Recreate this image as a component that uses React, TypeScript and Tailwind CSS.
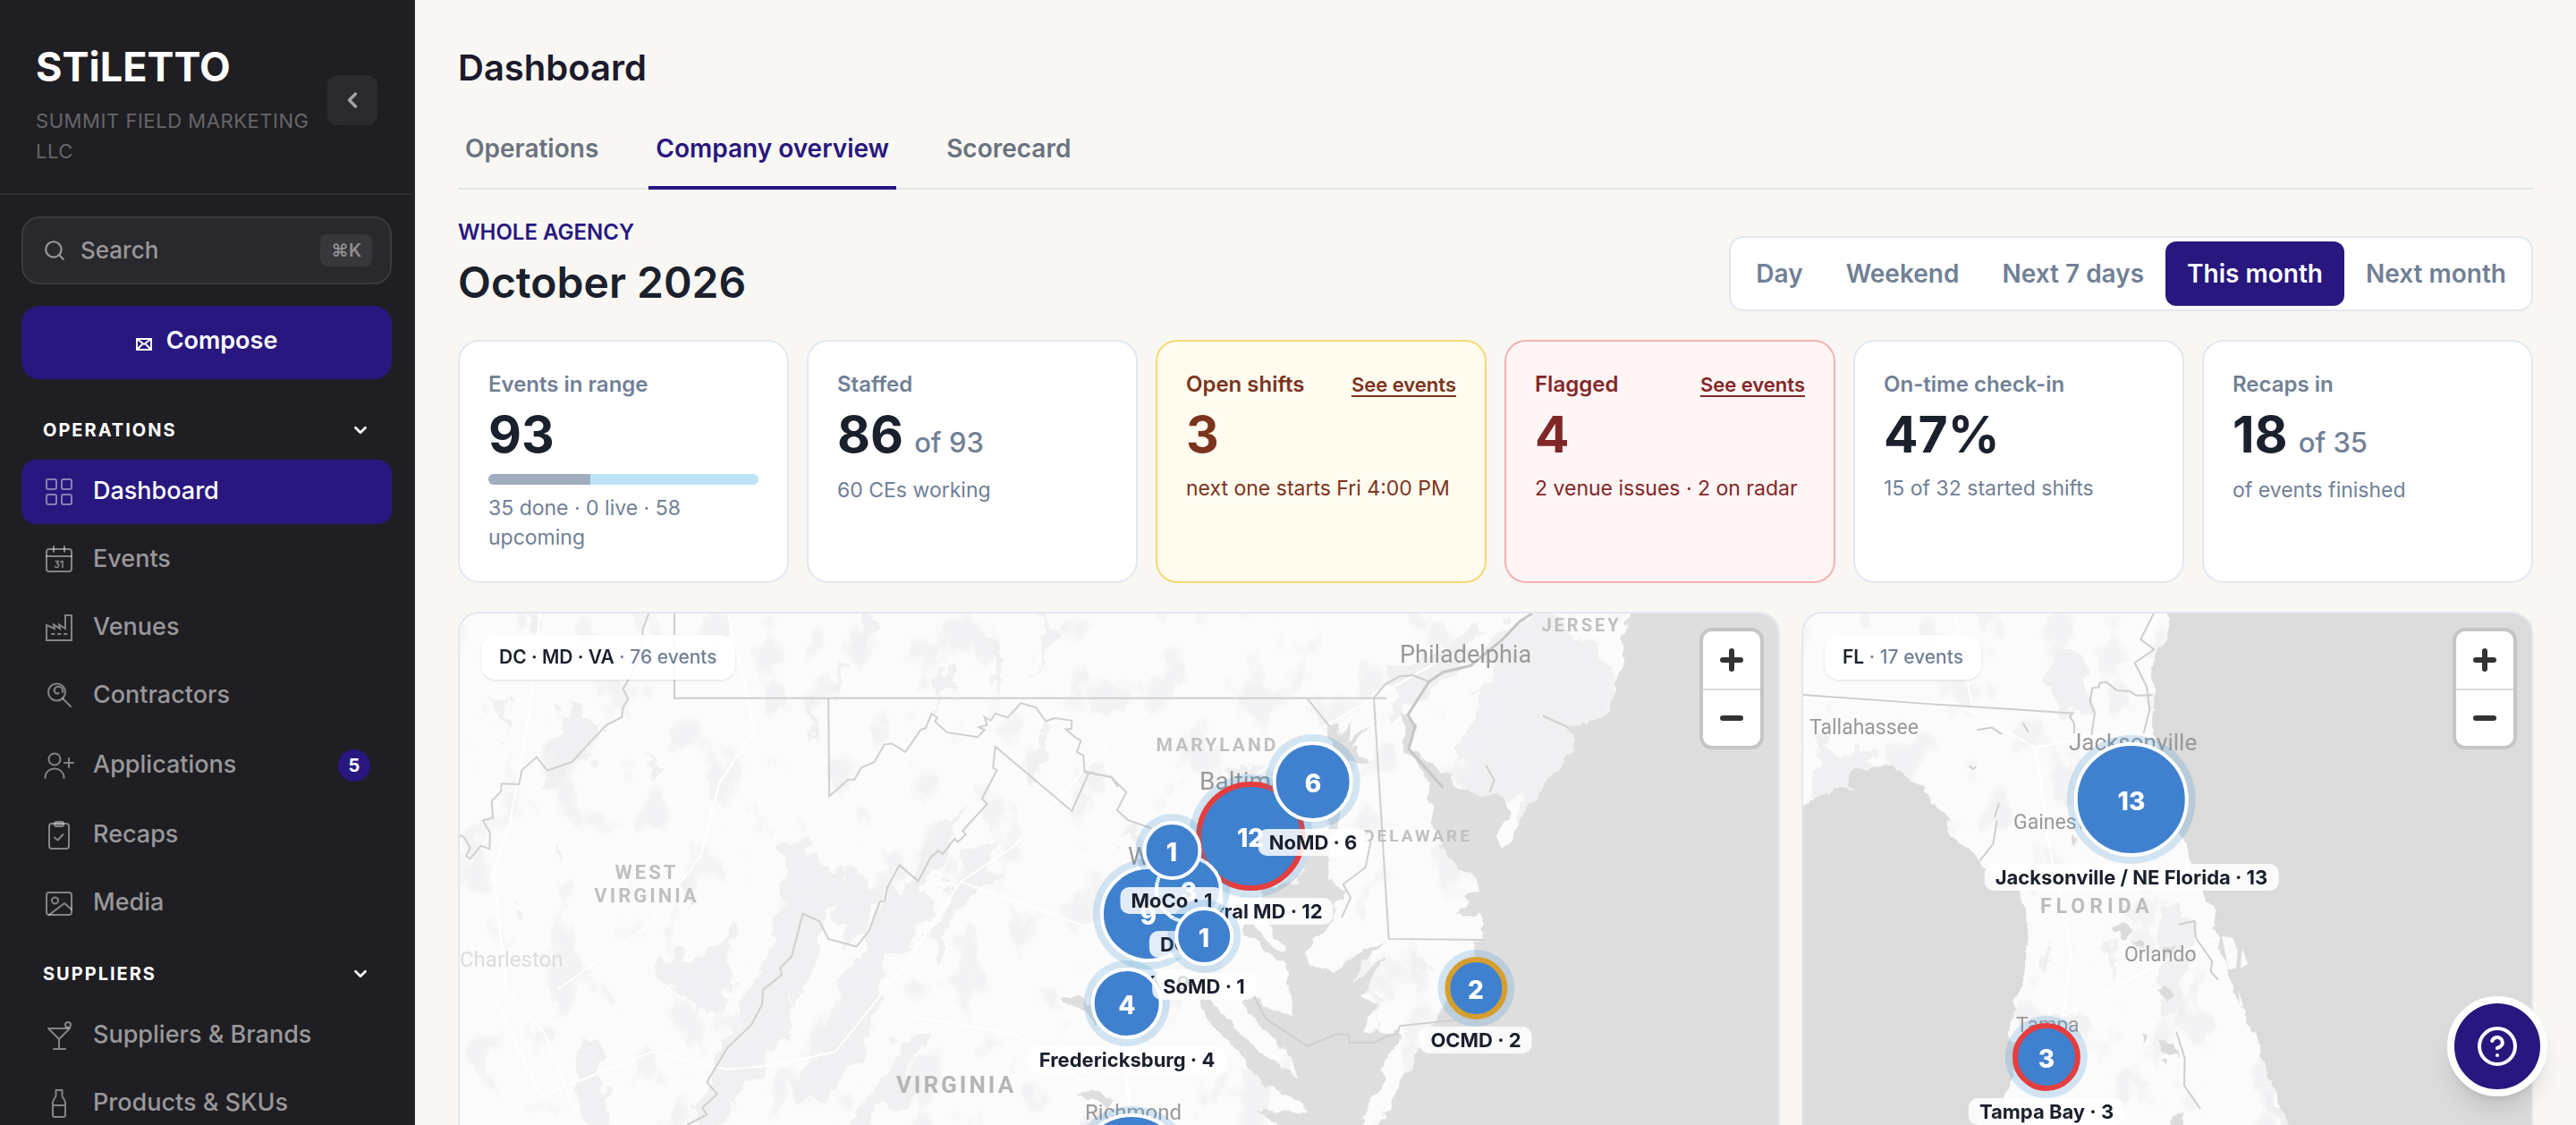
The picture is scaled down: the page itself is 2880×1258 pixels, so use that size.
import { ReactNode, useState } from "react";
import { ChevronDown, ChevronLeft, CircleQuestionMark, Search } from "lucide-react";
import clsx from "clsx";

interface NavItem {
  label: string;
  icon: ReactNode;
  badge?: number;
}

interface Marker {
  name: string;
  count: number;
  x: number;
  y: number;
  size: number;
  ring?: "red" | "amber";
}

interface Stat {
  label: string;
  value: string;
  suffix?: string;
  note: string;
  tone?: "amber" | "red";
  progress?: number;
}

const operations: NavItem[] = [
  {
    label: "Dashboard",
    icon: (
      <>
        <rect x="4" y="4" width="11" height="11" rx="2" />
        <rect x="21" y="4" width="11" height="11" rx="2" />
        <rect x="4" y="21" width="11" height="11" rx="2" />
        <rect x="21" y="21" width="11" height="11" rx="2" />
      </>
    ),
  },
  {
    label: "Events",
    icon: (
      <>
        <rect x="4" y="6" width="28" height="25" rx="3" />
        <path d="M4 14h28M12 3v6M24 3v6" />
        <path strokeWidth="1.6" d="M14 19.5h3.6l-2 2.6c3 0 2.600 4.400-.2 4.400-1 0-1.700-.5-2-1.200M20 20.500l2-1.200v7.300" />
      </>
    ),
  },
  {
    label: "Venues",
    icon: (
      <>
        <path d="M4 15v17h28V4h-7v15l-7-4.500 1 4.500-7-4.500 1 4.500z" strokeLinejoin="miter" />
        <path d="M10 25h2.500M17 25h2.500M24 25h2.500" />
      </>
    ),
  },
  {
    label: "Contractors",
    icon: (
      <>
        <circle cx="15.500" cy="14" r="9.500" />
        <path d="M22 21l9 9" />
        <path d="M17.500 15c-4 2-6.500-3-3.500-6 4-3 9 0 8 5" />
      </>
    ),
  },
  {
    label: "Applications",
    badge: 5,
    icon: (
      <>
        <circle cx="13" cy="11" r="6.500" />
        <path d="M2.500 32c0-14 21-14 21 0M29 10v10M24 15h10" />
      </>
    ),
  },
  {
    label: "Recaps",
    icon: (
      <>
        <rect x="7" y="5" width="22" height="28" rx="3" />
        <rect x="13" y="3" width="10" height="5" rx="2" />
        <path d="M15 5.500h6M13 20.500l3.500 3 6-6.500" />
      </>
    ),
  },
  {
    label: "Media",
    icon: (
      <>
        <rect x="4" y="6" width="28" height="25" rx="3" />
        <circle cx="13.500" cy="15" r="3.500" />
        <path d="M7 31l17-13 8 7" />
      </>
    ),
  },
];

const suppliers: NavItem[] = [
  {
    label: "Suppliers & Brands",
    icon: (
      <>
        <path d="M6 10h24L18 22zM18 22v11M12 33h13" />
        <circle cx="28" cy="6" r="3" />
      </>
    ),
  },
  {
    label: "Products & SKUs",
    icon: <path d="M14.500 3h7v6c0 3 3.500 4 3.500 8v14c0 1.500-.5 2-2 2H13c-1.500 0-2-.5-2-2V17c0-4 3.500-5 3.500-8zM11 20h14" />,
  },
];

const tabs = ["Operations", "Company overview", "Scorecard"];
const ranges = ["Day", "Weekend", "Next 7 days", "This month", "Next month"];

const stats: Stat[] = [
  { label: "Events in range", value: "93", note: "35 done · 0 live · 58 upcoming", progress: 35 / 93 },
  { label: "Staffed", value: "86", suffix: "of 93", note: "60 CEs working" },
  { label: "Open shifts", value: "3", note: "next one starts Fri 4:00 PM", tone: "amber" },
  { label: "Flagged", value: "4", note: "2 venue issues · 2 on radar", tone: "red" },
  { label: "On-time check-in", value: "47%", note: "15 of 32 started shifts" },
  { label: "Recaps in", value: "18", suffix: "of 35", note: "of events finished" },
];

// biggest first, so the small markets stay on top
const midAtlantic: Marker[] = [
  { name: "Richmond", count: 14, x: 751, y: 621, size: 124 },
  { name: "Central MD", count: 12, x: 884, y: 249, size: 122, ring: "red" },
  { name: "NoVA", count: 9, x: 770, y: 336, size: 108 },
  { name: "NoMD", count: 6, x: 954, y: 188, size: 90 },
  { name: "Fredericksburg", count: 4, x: 746, y: 436, size: 80 },
  { name: "DC", count: 3, x: 815, y: 309, size: 76 },
  { name: "OCMD", count: 2, x: 1136, y: 419, size: 70, ring: "amber" },
  { name: "MoCo", count: 1, x: 796, y: 265, size: 66 },
  { name: "SoMD", count: 1, x: 832, y: 361, size: 66 },
];

const florida: Marker[] = [
  { name: "Jacksonville / NE Florida", count: 13, x: 367, y: 208, size: 128 },
  { name: "Tampa Bay", count: 3, x: 272, y: 496, size: 76, ring: "red" },
];

function NavSection({ title, items, active }: { title: string; items: NavItem[]; active?: string }) {
  return (
    <section>
      <button className="flex h-[66px] w-full items-center justify-between pr-6 pl-6 text-[20px] font-bold tracking-widest text-white uppercase">
        {title}
        <ChevronDown size={22} strokeWidth={3} />
      </button>
      <ul className="flex flex-col gap-1">
        {items.map(item => (
          <li key={item.label}>
            <a
              href="#"
              className={clsx(
                "flex items-center gap-5 rounded-2xl pr-6 pl-6 text-[27px] font-medium",
                item.badge ? "h-[76px]" : "h-[72px]",
                item.label === active ? "bg-[#28177f] text-white" : "text-[#99989b]"
              )}
            >
              <svg
                viewBox="0 0 36 36"
                className="size-9 shrink-0 fill-none stroke-white/45 stroke-2"
                strokeLinecap="round"
                strokeLinejoin="round"
                aria-hidden="true"
              >
                {item.icon}
              </svg>
              <span className="grow pb-0.5">{item.label}</span>
              {item.badge ? (
                <span className="flex size-9 items-center justify-center rounded-full bg-[#28177f] text-[20px] font-bold text-white">
                  {item.badge}
                </span>
              ) : null}
            </a>
          </li>
        ))}
      </ul>
    </section>
  );
}

function Sidebar() {
  return (
    <aside className="flex w-[464px] shrink-0 flex-col overflow-hidden border-r-2 border-[#29282d] bg-[#1f1e23]">
      <header className="flex items-start justify-between border-b-2 border-[#2d2c31] pt-12 pr-10 pb-[30px] pl-10">
        <div>
          <div className="text-[45px] leading-[54px] font-bold text-white">STiLETTO</div>
          <div className="mt-4 w-[320px] text-[22px] leading-[34px] tracking-wide text-[#67666a] uppercase">
            Summit Field Marketing LLC
          </div>
        </div>
        <button
          aria-label="Collapse sidebar"
          className="mt-9 flex size-14 shrink-0 items-center justify-center rounded-xl bg-[#2b2a2f] text-[#a3a2a5]"
        >
          <ChevronLeft size={28} strokeWidth={3} />
        </button>
      </header>
      <div className="px-6 pt-6">
        <label className="flex h-[76px] items-center rounded-[20px] border-2 border-[#3b3a3f] bg-[#29282d] pr-5 pl-[22px]">
          <Search size={26} strokeWidth={2} className="shrink-0 text-[#99989b]" />
          <input
            type="text"
            aria-label="Search"
            placeholder="Search"
            className="min-w-0 grow bg-transparent pb-0.5 pl-4 text-[26px] font-medium text-white outline-none placeholder:text-[#99989b]"
          />
          <kbd className="flex h-9 items-center rounded-lg bg-[#38373c] px-3 font-[Inter,sans-serif] text-[20px] font-semibold text-[#8f8e92]">
            ⌘K
          </kbd>
        </label>
        <button className="mt-6 flex h-[82px] w-full items-center justify-center gap-4 rounded-[20px] bg-[#28177f] pb-1 text-[27px] font-semibold text-white">
          <svg viewBox="0 0 18 14" className="mt-2 h-3.5 w-[18px] fill-none stroke-white stroke-2" aria-hidden="true">
            <path d="M1 1h16v12H1zM1 1l8 6 8-6M1 13l6-6M17 13l-6-6" />
          </svg>
          Compose
        </button>
      </div>
      <nav className="flex flex-col gap-2.5 px-6 pt-6">
        <NavSection title="Operations" items={operations} active="Dashboard" />
        <NavSection title="Suppliers" items={suppliers} />
      </nav>
    </aside>
  );
}

function StatCard({ stat }: { stat: Stat }) {
  const { label, value, suffix, note, tone, progress } = stat;
  return (
    <article
      className={clsx(
        "rounded-3xl border-2 px-8 pt-7 pb-8",
        !tone && "border-[#e2e8f0] bg-white text-[#718096]",
        tone === "amber" && "border-[#f6d873] bg-[#fffbef] text-[#7b341e]",
        tone === "red" && "border-[#f5b0b5] bg-[#fff5f5] text-[#822727]"
      )}
    >
      <div className="flex items-center justify-between leading-10">
        <h3 className="text-[24px] font-semibold">{label}</h3>
        {tone ? (
          <a href="#" className="text-[22px] font-semibold underline decoration-2 underline-offset-4">
            See events
          </a>
        ) : null}
      </div>
      <p className={clsx("text-[57px] leading-[72px] font-bold", !tone && "text-[#1a202c]")}>
        {value}
        {suffix ? <span className="ml-3 text-[31px] leading-none font-medium text-[#718096]">{suffix}</span> : null}
      </p>
      {progress ? (
        <div className="mt-2 h-3 overflow-hidden rounded-full bg-[#bee3f8]">
          <div className="h-full bg-[#a0aec0]" style={{ width: `${progress * 100}%` }} />
        </div>
      ) : null}
      <p className={clsx("text-[23px] leading-[33px]", progress || suffix ? "mt-2.5" : "mt-2")}>{note}</p>
    </article>
  );
}

function MapMarker({ marker }: { marker: Marker }) {
  const { name, count, x, y, size, ring } = marker;
  return (
    <button
      aria-label={`${name}, ${count} events`}
      className="absolute flex flex-col items-center gap-2"
      style={{ left: x, top: y - size / 2, transform: "translateX(-50%)" }}
    >
      <span
        className={clsx(
          "flex items-center justify-center rounded-full bg-[#4081cf] pt-1 text-[28px] font-extrabold text-white shadow-[0_0_0_8px_rgba(49,140,206,0.2)]",
          !ring && "border-4 border-white",
          ring === "red" && "border-[6px] border-[#e53e3e]",
          ring === "amber" && "border-[6px] border-[#d69e2e]"
        )}
        style={{ width: size, height: size }}
      >
        {count}
      </span>
      <span className="rounded-[10px] bg-white/85 px-3 text-[22px] leading-[30px] font-bold whitespace-nowrap text-[#1a202c]">
        {name} · {count}
      </span>
    </button>
  );
}

function MapPanel({ region, events, markers, children }: { region: string; events: number; markers: Marker[]; children: ReactNode }) {
  return (
    <section className="relative h-[720px] overflow-hidden rounded-3xl border-2 border-[#e2e8f0] bg-[#fbfbfb] font-[Inter,sans-serif]">
      {children}
      {markers.map(marker => (
        <MapMarker key={marker.name} marker={marker} />
      ))}
      <div className="absolute top-6 left-6 rounded-2xl bg-white/90 px-5 text-[21px] leading-[50px] font-medium text-[#718096] shadow-sm">
        <strong className="font-semibold text-[#1a202c]">{region}</strong> · {events} events
      </div>
      <div className="absolute top-4 right-4 flex w-[72px] flex-col overflow-hidden rounded-[14px] border-4 border-[#c5c5c5] bg-white">
        <button aria-label="Zoom in" className="flex h-[66px] items-center justify-center border-b-2 border-[#d9d9d9]">
          <svg viewBox="0 0 26 26" className="size-[26px] stroke-[#333] stroke-6" strokeLinecap="round">
            <path d="M3 13h20M13 3v20" />
          </svg>
        </button>
        <button aria-label="Zoom out" className="flex h-[62px] items-center justify-center">
          <svg viewBox="0 0 26 26" className="size-[26px] stroke-[#333] stroke-6" strokeLinecap="round">
            <path d="M3 13h20" />
          </svg>
        </button>
      </div>
    </section>
  );
}

function MidAtlanticMap() {
  return (
    <svg viewBox="0 0 1474 716" preserveAspectRatio="xMinYMin slice" className="absolute inset-0 size-full" aria-hidden="true">
      <defs>
        <filter id="coast" x="0" y="0" width="1" height="1">
          <feTurbulence type="fractalNoise" baseFrequency="0.06" numOctaves="3" seed="4" />
          <feDisplacementMap in="SourceGraphic" scale="14" xChannelSelector="R" yChannelSelector="G" />
        </filter>
        <filter id="forest" x="0" y="0" width="1" height="1">
          <feTurbulence type="fractalNoise" baseFrequency="0.035" numOctaves="4" seed="9" />
          <feDisplacementMap in="SourceGraphic" scale="44" xChannelSelector="R" yChannelSelector="G" />
        </filter>
        {/* scattered small patches of ground cover */}
        <filter id="ground" x="0" y="0" width="1" height="1" colorInterpolationFilters="sRGB">
          <feTurbulence type="fractalNoise" baseFrequency="0.022 0.016" numOctaves="4" seed="21" />
          <feColorMatrix values="0 0 0 0 0.953  0 0 0 0 0.953  0 0 0 0 0.96  9 0 0 0 -5.2" />
        </filter>
      </defs>

      <rect width="1474" height="716" filter="url(#ground)" />

      {/* parks and forest */}
      <g filter="url(#forest)" fill="#f0f0f2">
        <path d="M360 265l30-20 10 30 45 15 18 25-8 50-25 10-10-40-20 45-25 30-8 70-20 10-10 35-25 5 10-50-5-50 30-50 12-55z" />
        <path d="M540 235l25-20-20 60-40 60-20-10z" />
        <path d="M480 300l35 10 5 30-50 70-10 60-40 60-40 30-5-40 30-50 25-60 30-50z" />
        <path d="M570 270l30-15-5 30-40 60-20 40-10-20 20-50z" />
        <path d="M225 385l60-10 15-30 10 40-10 45-35 15-45-40z" />
        <path d="M500 470l20-5-20 80-70 60-40 40-20 60h-120l40-40 50-30 90-60z" />
        <path d="M330 450l20 10-20 50-50 70-20-10 20-60z" />
        <path d="M140 460l15 30 10 50-10 60-20-60-5-40z" />
        <path d="M120 100l35 30-20 45-40 20z" />
        <path d="M30 100l30-5-15 40zM75 0l15 0-5 25zM210 160l20 15-15 15zM420 50l20 5-20 30zM440 0l30 0-20 40zM250 300l15 15-15 20z" />
        <path d="M105 250l10 20-8 10zM70 320l8 12-8 8zM390 90l10 60-15-30zM600 20l12 30-10 50zM640 140l15-20-5 70-15 10z" />
        <path d="M540 60l10 10-30 50zM655 0l15 20-30 50z" />
        <path d="M1170 0l60 5 60 60-5 60-60 20-30 60-50 20-30-70z" />
        <path d="M1040 70l50-30 60-30-40 60-70 45z" />
        <path d="M1185 180l40-50 30 30-70 70z" />
        <path d="M740 240l25 10 20 25-25 20zM850 180l40-10 20 15-40 30z" />
        <path d="M1055 380l30 10-10 25zM1015 425l20 10-10 30zM700 560l40 20-10 20-40-20z" />
      </g>

      {/* highways */}
      <g fill="none" stroke="#fff" strokeWidth="2">
        <path d="M90 0L75 130 55 240 38 290 52 420 95 470 130 560M300 0L330 130 290 190 270 270 210 350 110 420M40 430L90 540 215 490 300 510 350 505 420 490" />
        <path d="M740 130L620 260 560 300 500 390 420 490M560 300L700 350 770 330 850 210 960 130 1100 50M770 330L740 450 750 570M500 450L620 470 750 560" />
      </g>

      {/* ocean, bays and rivers */}
      <g filter="url(#coast)" fill="#dedede">
        <path
          transform="translate(986 -16) scale(.3333 .375)"
          d="M990 0L940 110L945 190L910 290L895 340L830 372L760 385L790 420L760 470L700 530L640 600L600 660L560 725L525 742L522 715L545 660L570 640L545 590L490 575L440 580L385 550L330 510L280 480L232 440L250 380L225 345L205 345L218 390L213 450L255 485L288 530L296 600L302 660L340 720L348 760L400 815L455 832L462 870L410 878L435 900L380 940L472 940L475 1018L442 1018L450 1060L440 1150L325 1215L315 1262L290 1280L250 1370L190 1450L130 1568L60 1700L30 1950H1600V0Z"
        />
        <path
          transform="translate(666 94) scale(.3571 .3333)"
          d="M860 100L890 90L885 125L935 80L905 150L990 90L930 160L985 220L900 210L925 300L880 430L860 480L868 540L850 610L905 640L880 690L860 760L780 850L800 900L880 915L920 880L965 855L1040 820L980 870L945 925L930 960L1030 870L985 960L960 1000L1000 1030L960 1120L1060 1130L1078 1105L1062 1180L1020 1240L1035 1290L985 1345L960 1450L930 1700H750L700 1640L820 1600L700 1540L660 1500L760 1480L620 1375L750 1400L800 1390L740 1340L640 1290L595 1220L545 1160L480 1090L440 1000L480 990L540 1090L640 1180L760 1280L745 1220L640 1100L580 1020L610 980L650 1030L745 1065L735 990L720 900L650 850L590 770L600 740L690 840L720 850L640 720L650 640L760 620L800 500L850 430L860 250Z"
        />
        <path d="M690 540l20-8 20 12-5 6zM672 430l22-2 12 12 6 18-14-14z" />
      </g>

      {/* state lines */}
      <g fill="none" stroke="#cfcfcf" strokeWidth="2">
        <g transform="translate(-14 -16) scale(.4783 .375)">
          <path vectorEffect="non-scaling-stroke" d="M472 40L457 90L455 150L432 220L411 268L423 298L412 320L408 352L373 374L335 425L292 485L234 511L209 471L174 511L168 552L127 550L126 573L104 602L107 652L83 660L100 696L99 745L79 735L53 775L44 765L54 742L40 711L28 703" />
          <path vectorEffect="non-scaling-stroke" d="M531 40V295H2196M891 295L893 588L937 538H952L968 502L998 486L1022 433L1040 431L1071 456L1107 389L1118 385L1132 342L1146 353L1140 365L1168 397L1240 411L1256 390L1243 382L1262 375L1256 352L1270 362L1281 341L1310 353L1341 310L1376 323L1399 364L1420 355L1460 362L1459 386L1446 388L1466 410L1481 422L1472 456L1487 466L1490 516L1552 530L1568 560" />
          <path vectorEffect="non-scaling-stroke" d="M1499 520L1460 632L1281 439L1276 503L1285 510L1250 595L1262 611L1205 690L1212 702L1193 725L1186 714L1158 760L1148 750L1130 770L1101 841L1057 793L1028 862L1023 900L1011 903L986 988L957 1036L891 1013L870 960L831 938L805 1066L778 1100L782 1120L738 1165L736 1208L711 1270L655 1337L607 1440L631 1476L596 1517L607 1537L560 1568" />
        </g>
        <g transform="translate(666 94) scale(.3571 .3333)">
          <path vectorEffect="non-scaling-stroke" d="M88 247L176 268L222 318L193 378L228 412L300 438" />
          <path vectorEffect="non-scaling-stroke" d="M790 5L860 100M620 1000L660 1080L790 1170L882 1128L920 1132V1158H1000L1040 1135L1070 1130L1078 1102L1250 1082" />
        </g>
        <g transform="translate(986 -16) scale(.3333 .375)">
          <path vectorEffect="non-scaling-stroke" d="M108 295L158 1013L478 1016M108 295L145 255L195 230L240 227L293 246" />
          <path vectorEffect="non-scaling-stroke" stroke="#c6c6c6" strokeWidth="3" d="M640 42L595 68L540 120L433 198L340 218L293 246L222 345L246 380L225 447L340 562" />
          <path vectorEffect="non-scaling-stroke" d="M98 720L80 800L5 850L30 890L0 950M675 348L760 382M484 495L512 540L497 575" />
        </g>
      </g>

      <g className="fill-[#c0c0c0] font-[Roboto,sans-serif] text-[22px] font-bold tracking-[3px]" textAnchor="middle">
        <text x="209" y="297">WEST</text>
        <text x="209" y="323">VIRGINIA</text>
        <text x="847" y="154" className="text-[21px]">MARYLAND</text>
        <text x="1071" y="255" className="text-[19px]">DELAWARE</text>
        <text x="1254" y="20" className="text-[20px]">JERSEY</text>
        <text x="555" y="536" className="fill-[#b5b5b5] text-[26px]">VIRGINIA</text>
      </g>
      <g className="fill-[#999] font-[Roboto,sans-serif] text-[24px] font-normal">
        <text x="0" y="395" className="fill-[#dcdcdc]">Charleston</text>
        <text x="1051" y="55" className="text-[27px]">Philadelphia</text>
        <text x="827" y="197" className="text-[28px]">Baltimore</text>
        <text x="747" y="281" className="text-[28px]">Washington</text>
        <text x="699" y="566">Richmond</text>
      </g>
    </svg>
  );
}

function FloridaMap() {
  return (
    <svg viewBox="0 0 814 716" preserveAspectRatio="xMinYMin slice" className="absolute inset-0 size-full" aria-hidden="true">
      <rect width="814" height="716" filter="url(#ground)" />
      <g filter="url(#forest)" fill="#f0f0f2">
        <path d="M270 60l20-20 25 10 5 60-35 5zM10 140l80 10-20 60-60 20zM400 330l30 10 5 50-20 60-20-40zM265 370l15 15-15 15zM340 360l20 20-10 30z" />
        <path d="M245 450l40-8 20 10-30 25zM490 405l15 20-10 20zM512 530l25 20 20 40-30-20z" />
      </g>
      <path d="M0 95L170 100 260 150 360 130M170 0L190 110M260 150L275 260 300 380 290 450 420 380 470 360" fill="none" stroke="#fff" strokeWidth="2" />
      <g filter="url(#coast)" fill="#dbdbdb">
        <path
          transform="translate(-16 -16) scale(.3333 .375)"
          d="M0 640L45 622L130 575L190 560L215 570L190 545L225 510L290 500L345 498L440 560L480 610L540 655L545 710L610 745L650 800L770 870L795 930L805 1010L790 1080L775 1150L750 1190L762 1220L735 1290L745 1320L780 1300L770 1390L740 1440L720 1500L760 1560L800 1700L860 1950H0Z"
        />
        <path
          transform="translate(384 -16) scale(.3333 .375)"
          d="M75 0L80 70L65 120L30 170L20 230L25 290L15 360L25 410L100 640L125 720L150 800L180 870L225 930L235 985L250 1060L272 1110L300 1190L330 1245L380 1340L400 1410L430 1480L475 1568L520 1700L560 1950H1400V0Z"
        />
        <path d="M404 375l14-4-6 12zM396 420l12-3 6 12-10 4zM380 470l6 5-6 6zM396 478l18 5 4 14-12-4zM410 565l12-4 4 10-12 8zM400 500l6-3v8zM300 245l8 6-6 12zM344 350l18-2 10 8-12 8zM366 366l14 2-4 8z" />
      </g>
      <g transform="translate(384 -16) scale(.3333 .375)" fill="#fafafa">
        <path d="M252 1005L290 1010L305 1050L300 1100L275 1105zM320 1040L340 1088L315 1100zM308 1168L325 1215L312 1210z" />
      </g>
      <g transform="translate(-16 -16) scale(.3333 .375)" fill="none" stroke="#cdcdcd" strokeWidth="2">
        <path vectorEffect="non-scaling-stroke" d="M48 285L480 313L952 340L942 350L957 370V400M1015 405L1026 340L1010 305L1018 265L1040 262L1042 250L1065 247L1100 272L1142 274L1165 287L1220 286" />
        <path vectorEffect="non-scaling-stroke" d="M630 390L680 383L715 403M605 497L618 507L628 499M785 370L803 395M705 608L690 650M698 660L685 730L640 780M1310 970L1360 960L1365 1010M1300 1290L1328 1370L1326 1450L1380 1520" />
        <path vectorEffect="non-scaling-stroke" d="M1365 1010L1420 1080L1415 1110L1440 1135M1225 40L1180 120L1225 150L1160 190L1200 260L1210 330L1190 400" />
      </g>
      <g className="fill-[#999] font-[Roboto,sans-serif] text-[23px] font-normal">
        <text x="7" y="135">Tallahassee</text>
        <text x="297" y="153" className="text-[26px]">Jacksonville</text>
        <text x="235" y="241">Gainesville</text>
        <text x="359" y="389">Orlando</text>
        <text x="238" y="468">Tampa</text>
        <text x="265" y="335" className="fill-[#bdbdbd] font-bold tracking-[5px]">FLORIDA</text>
      </g>
    </svg>
  );
}

export default function App() {
  const [tab, setTab] = useState("Company overview");
  const [range, setRange] = useState("This month");

  return (
    <div className="flex h-screen overflow-hidden bg-[#f8f7f3] font-[Inter,sans-serif]">
      <Sidebar />
      <main className="min-w-0 grow overflow-hidden px-12 pt-12">
        <h1 className="text-[40px] leading-14 font-semibold text-[#1c1a2b]">Dashboard</h1>
        <div className="mt-5 flex gap-12 border-b-2 border-[#e4e4e7]">
          {tabs.map(name => (
            <button
              key={name}
              onClick={() => setTab(name)}
              className={clsx(
                "-mb-0.5 border-b-4 px-2 pt-5 pb-5 text-[28px] leading-11 font-semibold",
                name === tab ? "border-[#28177f] text-[#28177f]" : "border-transparent text-[#6b7280]"
              )}
            >
              {name}
            </button>
          ))}
        </div>

        <div className="mt-8 flex items-end justify-between">
          <div>
            <p className="text-[24px] leading-8 font-semibold text-[#28177f] uppercase">Whole agency</p>
            <h2 className="mt-1 text-[48px] leading-[72px] font-semibold text-[#1a202c]">October 2026</h2>
          </div>
          <div className="mb-1 flex rounded-2xl border-2 border-[#e2e8f0] bg-white p-1">
            {ranges.map(name => (
              <button
                key={name}
                onClick={() => setRange(name)}
                className={clsx(
                  "h-[72px] rounded-xl px-6 text-[28px] font-semibold",
                  name === range ? "bg-[#28177f] text-white" : "text-[#718096]"
                )}
              >
                {name}
              </button>
            ))}
          </div>
        </div>

        <div className="mt-7 grid grid-cols-6 gap-5">
          {stats.map(stat => (
            <StatCard key={stat.label} stat={stat} />
          ))}
        </div>

        <div className="mt-8 grid grid-cols-[1478fr_818fr] gap-6">
          <MapPanel region="DC · MD · VA" events={76} markers={midAtlantic}>
            <MidAtlanticMap />
          </MapPanel>
          <MapPanel region="FL" events={17} markers={florida}>
            <FloridaMap />
          </MapPanel>
        </div>
      </main>
      <button
        aria-label="Help"
        className="fixed right-8 bottom-8 flex size-28 items-center justify-center rounded-full border-8 border-white bg-[#28177f] text-white shadow-xl"
      >
        <CircleQuestionMark size={48} strokeWidth={2} />
      </button>
    </div>
  );
}
